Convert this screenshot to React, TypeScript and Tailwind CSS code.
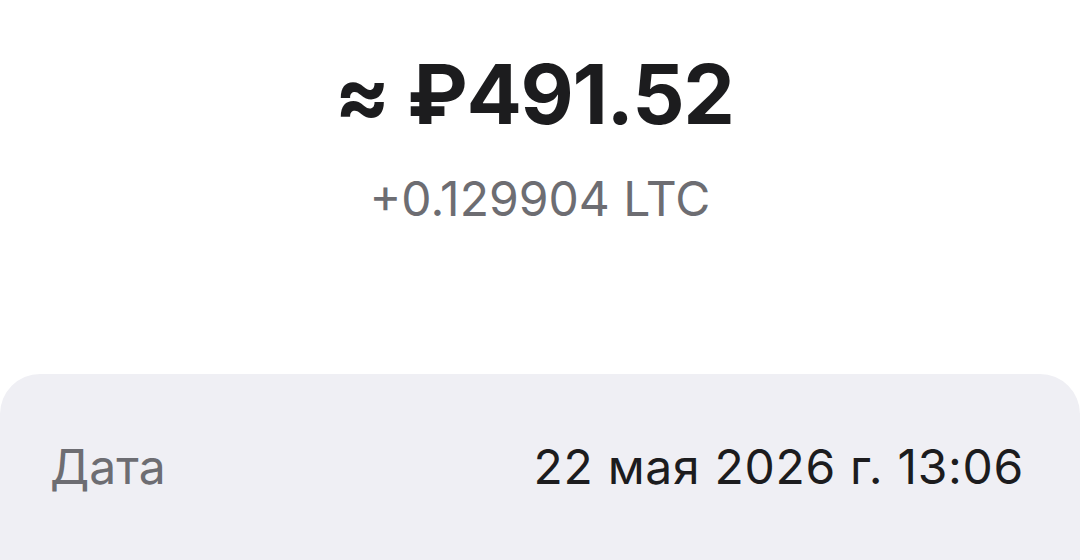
export default function App() {
  return (
    <div className="h-[560px] w-[1080px] overflow-hidden bg-white font-['Inter','Noto_Sans',sans-serif]">
      <div className="flex flex-col items-center pt-[54px]">
        <div className="pr-[12px] text-[82px] font-bold leading-none tracking-[-1.3px] text-[#1c1c1e]">
          ≈ ₽491.52
        </div>
        <div className="mt-[39px] text-[48px] leading-none text-[#6d6d72]">
          +0.129904 LTC
        </div>
      </div>

      <div className="mt-[151px] h-[200px] rounded-t-[40px] bg-[#efeff4] px-[50px] pt-[69px]">
        <div className="flex items-center justify-between text-[48px] leading-none">
          <span className="text-[#6d6d72]">Дата</span>
          <span className="pr-[6px] tracking-[0.7px] text-[#1c1c1e]">22 мая 2026 г. 13:06</span>
        </div>
      </div>
    </div>
  );
}
